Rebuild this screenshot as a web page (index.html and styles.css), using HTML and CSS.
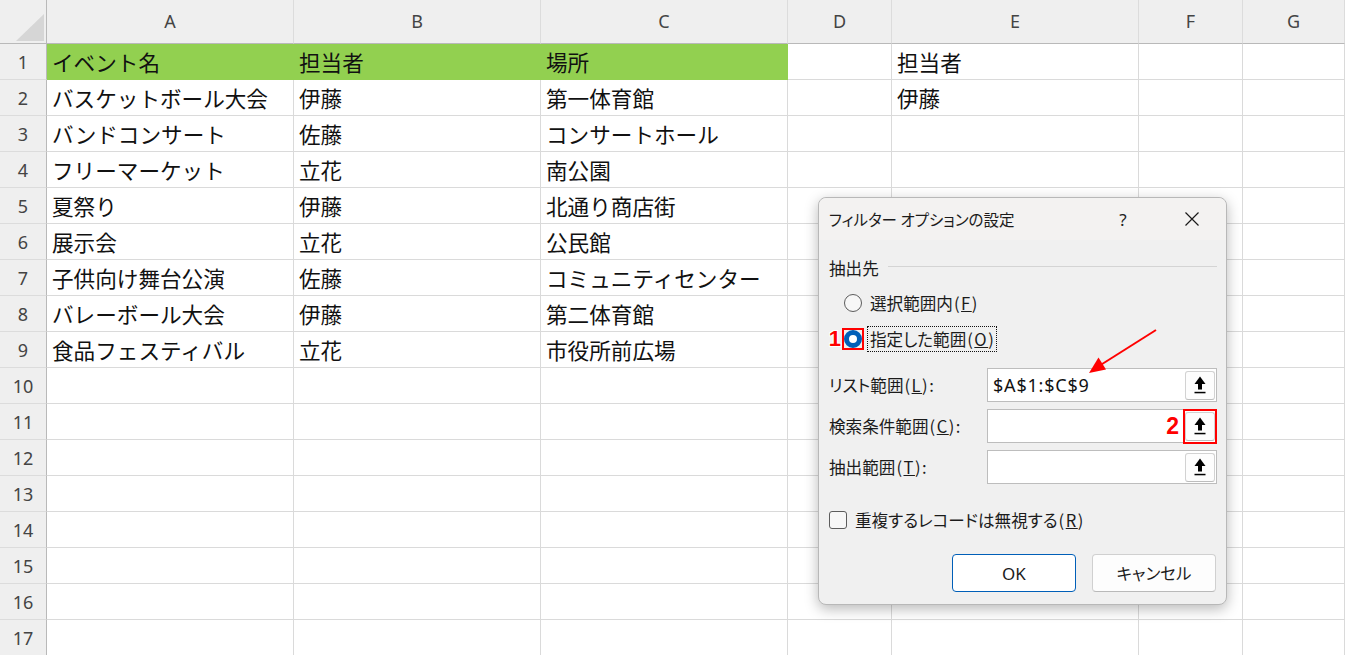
FILE: index.html
```html
<!DOCTYPE html>
<html lang="ja">
<head>
<meta charset="utf-8">
<title>フィルター オプションの設定</title>
<link rel="stylesheet" href="styles.css">
</head>
<body>
<div class="sheet">
  <div class="grid">
    <div class="corner"><svg width="46" height="43" viewBox="0 0 46 43"><polygon points="16,41 44,41 44,14" fill="#d6d6d6"/></svg></div>
    <div class="colhead">A</div><div class="colhead">B</div><div class="colhead">C</div><div class="colhead">D</div><div class="colhead">E</div><div class="colhead">F</div><div class="colhead">G</div>

    <div class="rowhead">1</div><div class="cell hl">イベント名</div><div class="cell hl">担当者</div><div class="cell hl">場所</div><div class="cell"></div><div class="cell">担当者</div><div class="cell"></div><div class="cell"></div>
    <div class="rowhead">2</div><div class="cell">バスケットボール大会</div><div class="cell">伊藤</div><div class="cell">第一体育館</div><div class="cell"></div><div class="cell">伊藤</div><div class="cell"></div><div class="cell"></div>
    <div class="rowhead">3</div><div class="cell">バンドコンサート</div><div class="cell">佐藤</div><div class="cell">コンサートホール</div><div class="cell"></div><div class="cell"></div><div class="cell"></div><div class="cell"></div>
    <div class="rowhead">4</div><div class="cell">フリーマーケット</div><div class="cell">立花</div><div class="cell">南公園</div><div class="cell"></div><div class="cell"></div><div class="cell"></div><div class="cell"></div>
    <div class="rowhead">5</div><div class="cell">夏祭り</div><div class="cell">伊藤</div><div class="cell">北通り商店街</div><div class="cell"></div><div class="cell"></div><div class="cell"></div><div class="cell"></div>
    <div class="rowhead">6</div><div class="cell">展示会</div><div class="cell">立花</div><div class="cell">公民館</div><div class="cell"></div><div class="cell"></div><div class="cell"></div><div class="cell"></div>
    <div class="rowhead">7</div><div class="cell">子供向け舞台公演</div><div class="cell">佐藤</div><div class="cell">コミュニティセンター</div><div class="cell"></div><div class="cell"></div><div class="cell"></div><div class="cell"></div>
    <div class="rowhead">8</div><div class="cell">バレーボール大会</div><div class="cell">伊藤</div><div class="cell">第二体育館</div><div class="cell"></div><div class="cell"></div><div class="cell"></div><div class="cell"></div>
    <div class="rowhead">9</div><div class="cell">食品フェスティバル</div><div class="cell">立花</div><div class="cell">市役所前広場</div><div class="cell"></div><div class="cell"></div><div class="cell"></div><div class="cell"></div>
    <div class="rowhead">10</div><div class="cell"></div><div class="cell"></div><div class="cell"></div><div class="cell"></div><div class="cell"></div><div class="cell"></div><div class="cell"></div>
    <div class="rowhead">11</div><div class="cell"></div><div class="cell"></div><div class="cell"></div><div class="cell"></div><div class="cell"></div><div class="cell"></div><div class="cell"></div>
    <div class="rowhead">12</div><div class="cell"></div><div class="cell"></div><div class="cell"></div><div class="cell"></div><div class="cell"></div><div class="cell"></div><div class="cell"></div>
    <div class="rowhead">13</div><div class="cell"></div><div class="cell"></div><div class="cell"></div><div class="cell"></div><div class="cell"></div><div class="cell"></div><div class="cell"></div>
    <div class="rowhead">14</div><div class="cell"></div><div class="cell"></div><div class="cell"></div><div class="cell"></div><div class="cell"></div><div class="cell"></div><div class="cell"></div>
    <div class="rowhead">15</div><div class="cell"></div><div class="cell"></div><div class="cell"></div><div class="cell"></div><div class="cell"></div><div class="cell"></div><div class="cell"></div>
    <div class="rowhead">16</div><div class="cell"></div><div class="cell"></div><div class="cell"></div><div class="cell"></div><div class="cell"></div><div class="cell"></div><div class="cell"></div>
    <div class="rowhead">17</div><div class="cell"></div><div class="cell"></div><div class="cell"></div><div class="cell"></div><div class="cell"></div><div class="cell"></div><div class="cell"></div>
  </div>

  <div class="dialog">
    <div class="titlebar">
      <span class="title">フィルター オプションの設定</span>
      <span class="help">?</span>
      <span class="close"><svg width="16" height="16" viewBox="0 0 16 16"><path d="M1.5 1.5 L14.5 14.5 M14.5 1.5 L1.5 14.5" stroke="#1a1a1a" stroke-width="1.2" fill="none"/></svg></span>
    </div>
    <div class="dbody">
      <div class="group-head"><span>抽出先</span><span class="rule"></span></div>

      <div class="radio-row first">
        <span class="radio"></span>
        <span class="rlabel">選択範囲内<span class="lat">(<u>F</u>)</span></span>
      </div>
      <div class="radio-row second">
        <span class="radio-mark">
          <span class="badge badge-1">1</span>
          <span class="radio checked"></span>
        </span>
        <span class="rlabel focus">指定した範囲<span class="lat">(<u>O</u>)</span></span>
      </div>

      <div class="ref-row first">
        <span class="ref-label">リスト範囲<span class="lat">(<u>L</u>):</span></span>
        <div class="ref-box">
          <span class="ref-text">$A$1:$C$9</span>
          <span class="ref-btn"><svg width="14" height="18" viewBox="0 0 14 18"><polygon points="7,0.5 12.5,8 1.5,8" fill="#000"/><rect x="5" y="7" width="4" height="6.5" fill="#000"/><rect x="1.5" y="15.8" width="11" height="1.5" fill="#000"/></svg></span>
        </div>
      </div>
      <div class="ref-row">
        <span class="ref-label">検索条件範囲<span class="lat">(<u>C</u>):</span></span>
        <div class="ref-box">
          <span class="ref-text"></span>
          <span class="badge badge-2">2</span>
          <span class="ref-btn"><svg width="14" height="18" viewBox="0 0 14 18"><polygon points="7,0.5 12.5,8 1.5,8" fill="#000"/><rect x="5" y="7" width="4" height="6.5" fill="#000"/><rect x="1.5" y="15.8" width="11" height="1.5" fill="#000"/></svg></span>
          <span class="btn-mark"></span>
        </div>
      </div>
      <div class="ref-row">
        <span class="ref-label">抽出範囲<span class="lat">(<u>T</u>):</span></span>
        <div class="ref-box">
          <span class="ref-text"></span>
          <span class="ref-btn"><svg width="14" height="18" viewBox="0 0 14 18"><polygon points="7,0.5 12.5,8 1.5,8" fill="#000"/><rect x="5" y="7" width="4" height="6.5" fill="#000"/><rect x="1.5" y="15.8" width="11" height="1.5" fill="#000"/></svg></span>
        </div>
      </div>

      <div class="check-row">
        <span class="checkbox"></span>
        <span class="clabel">重複するレコードは無視する<span class="lat">(<u>R</u>)</span></span>
      </div>

      <div class="buttons">
        <span class="btn primary">OK</span>
        <span class="btn">キャンセル</span>
      </div>
    </div>
  </div>

  <svg class="annot" width="1345" height="655" viewBox="0 0 1345 655">
    <line x1="1156" y1="330" x2="1099" y2="366" stroke="#ff0000" stroke-width="2"/>
    <polygon points="1089,373 1106,369.5 1098.5,357.5" fill="#ff0000"/>
  </svg>
</div>
</body>
</html>
```

FILE: styles.css
```css
html, body {
  margin: 0;
  padding: 0;
  background: #ffffff;
  overflow: hidden;
}

.sheet {
  position: relative;
  width: 1345px;
  height: 655px;
  overflow: hidden;
}

.grid {
  display: grid;
  grid-template-columns: 47px 247px 247px 247px 104px 247px 104px 102px;
  grid-template-rows: 44px repeat(17, 36px);
}

.corner {
  box-sizing: border-box;
  background: #efefef;
  border-right: 1px solid #b9b9b9;
  border-bottom: 1px solid #b9b9b9;
}
.corner svg { display: block; }

.colhead {
  box-sizing: border-box;
  background: #efefef;
  border-right: 1px solid #dcdcdc;
  border-bottom: 1px solid #b9b9b9;
  display: flex;
  align-items: center;
  justify-content: center;
  font-family: "Noto Sans", "Open Sans", sans-serif;
  font-size: 18px;
  color: #444444;
  padding-bottom: 1px;
}

.rowhead {
  box-sizing: border-box;
  background: #efefef;
  border-right: 1px solid #b9b9b9;
  border-bottom: 1px solid #dcdcdc;
  display: flex;
  align-items: center;
  justify-content: center;
  font-family: "Noto Sans", "Open Sans", sans-serif;
  font-size: 18px;
  color: #444444;
}

.cell {
  box-sizing: border-box;
  border-right: 1px solid #dadada;
  border-bottom: 1px solid #dadada;
  display: flex;
  align-items: center;
  padding-left: 5px;
  font-family: "Noto Sans CJK JP", "Noto Sans", sans-serif;
  font-size: 21.6px;
  color: #111111;
  white-space: nowrap;
  overflow: visible;
}

.cell.hl {
  background: #92d050;
  border-right-color: #92d050;
  border-bottom-color: #92d050;
}

/* Dialog */
.dialog {
  position: absolute;
  left: 818px;
  top: 197px;
  width: 409px;
  height: 408px;
  box-sizing: border-box;
  border: 1px solid #b8b8b8;
  border-radius: 8px;
  background: #f0f0f0;
  box-shadow: 0 4px 14px rgba(0, 0, 0, 0.28);
  font-family: "Noto Sans CJK JP", "Noto Sans", sans-serif;
  font-feature-settings: "palt";
  font-size: 16.6px;
  color: #1b1b1b;
  overflow: visible;
}

.lat {
  letter-spacing: 1.5px;
  margin-left: 1px;
}

.titlebar {
  height: 42px;
  display: flex;
  align-items: center;
  padding-left: 10px;
  background: #f3f2f1;
  border-radius: 8px 8px 0 0;
}
.title {
  flex: 1;
  font-size: 15.5px;
}
.help {
  width: 20px;
  text-align: center;
  font-family: "Noto Sans", sans-serif;
  font-size: 17px;
  margin-right: 51px;
  color: #222;
}
.close {
  display: flex;
  margin-right: 26px;
}

.dbody {
  padding: 0 9px 13px 10px;
  display: flex;
  flex-direction: column;
}

.group-head {
  margin-top: 18px;
  height: 20px;
  display: flex;
  align-items: center;
}
.rule {
  flex: 1;
  height: 1px;
  background: #d4d4d4;
  margin-left: 9px;
  margin-top: -4px;
}

.radio-row {
  height: 26px;
  display: flex;
  align-items: center;
}
.radio-row.first { margin-top: 12px; }
.radio-row.second { margin-top: 10px; }

.radio {
  box-sizing: border-box;
  width: 18px;
  height: 18px;
  border-radius: 50%;
  border: 1px solid #5c5c5c;
  background: #f7f7f7;
  flex: none;
}
.radio-row.first .radio { margin-left: 15px; }
.radio-row.first .rlabel { margin-left: 8px; }

.radio.checked {
  border: 5px solid #005fb8;
  background: #ffffff;
}

.radio-mark {
  position: relative;
  margin-left: 13px;
  border: 2px solid #ff0000;
  display: flex;
  flex: none;
}

.focus {
  margin-left: 3px;
  border: 1px dotted #111;
  padding: 0 1px 0 2px;
  line-height: 24px;
}

.badge {
  position: absolute;
  font-family: "Liberation Sans", Arial, sans-serif;
  font-weight: bold;
  color: #ff0000;
}
.badge-1 {
  right: calc(100% + 3px);
  top: 50%;
  transform: translateY(-50%);
  font-size: 22px;
  line-height: 22px;
  text-shadow: -1px -1px 0 #fff, 1px -1px 0 #fff, -1px 1px 0 #fff, 1px 1px 0 #fff;
}
.badge-2 {
  right: 37px;
  top: 50%;
  transform: translateY(-50%);
  font-size: 23px;
  line-height: 23px;
}

.ref-row {
  display: flex;
  align-items: center;
  height: 34px;
  margin-top: 7px;
}
.ref-row.first { margin-top: 16px; }

.ref-label {
  width: 158px;
  flex: none;
}

.ref-box {
  position: relative;
  flex: 1;
  height: 34px;
  box-sizing: border-box;
  border: 1px solid #bdbdbd;
  background: #ffffff;
  display: flex;
  align-items: center;
  padding-left: 5px;
}

.ref-text {
  flex: 1;
  font-family: "Noto Sans", "Open Sans", sans-serif;
  font-feature-settings: normal;
  font-size: 18px;
  letter-spacing: 0.8px;
  color: #111;
}

.ref-btn {
  box-sizing: border-box;
  width: 30px;
  height: 29px;
  margin-right: 1px;
  border: 1px solid #d2d2d2;
  border-bottom-color: #bdbdbd;
  border-radius: 3px;
  background: #fdfdfd;
  display: flex;
  align-items: center;
  justify-content: center;
}
.ref-btn svg { display: block; }

.btn-mark {
  position: absolute;
  right: -1px;
  top: -1px;
  width: 34px;
  height: 35px;
  box-sizing: border-box;
  border: 2px solid #ff0000;
}

.check-row {
  margin-top: 26px;
  height: 20px;
  display: flex;
  align-items: center;
}
.checkbox {
  box-sizing: border-box;
  width: 18px;
  height: 18px;
  border: 1px solid #5c5c5c;
  border-radius: 3px;
  background: #f7f7f7;
  flex: none;
}
.clabel { margin-left: 8px; }

.buttons {
  margin-top: 24px;
  display: flex;
  justify-content: flex-end;
  gap: 16px;
  padding-right: 1px;
}
.btn {
  box-sizing: border-box;
  width: 124px;
  height: 38px;
  border: 1px solid #d0d0d0;
  border-bottom-color: #b9b9b9;
  border-radius: 4px;
  background: #fdfdfd;
  display: flex;
  align-items: center;
  justify-content: center;
  font-size: 16.5px;
}
.btn.primary {
  border: 1px solid #005fb8;
  font-family: "Noto Sans", "Open Sans", sans-serif;
  font-size: 17px;
  background: #ffffff;
}

.annot {
  position: absolute;
  left: 0;
  top: 0;
  pointer-events: none;
}
```
